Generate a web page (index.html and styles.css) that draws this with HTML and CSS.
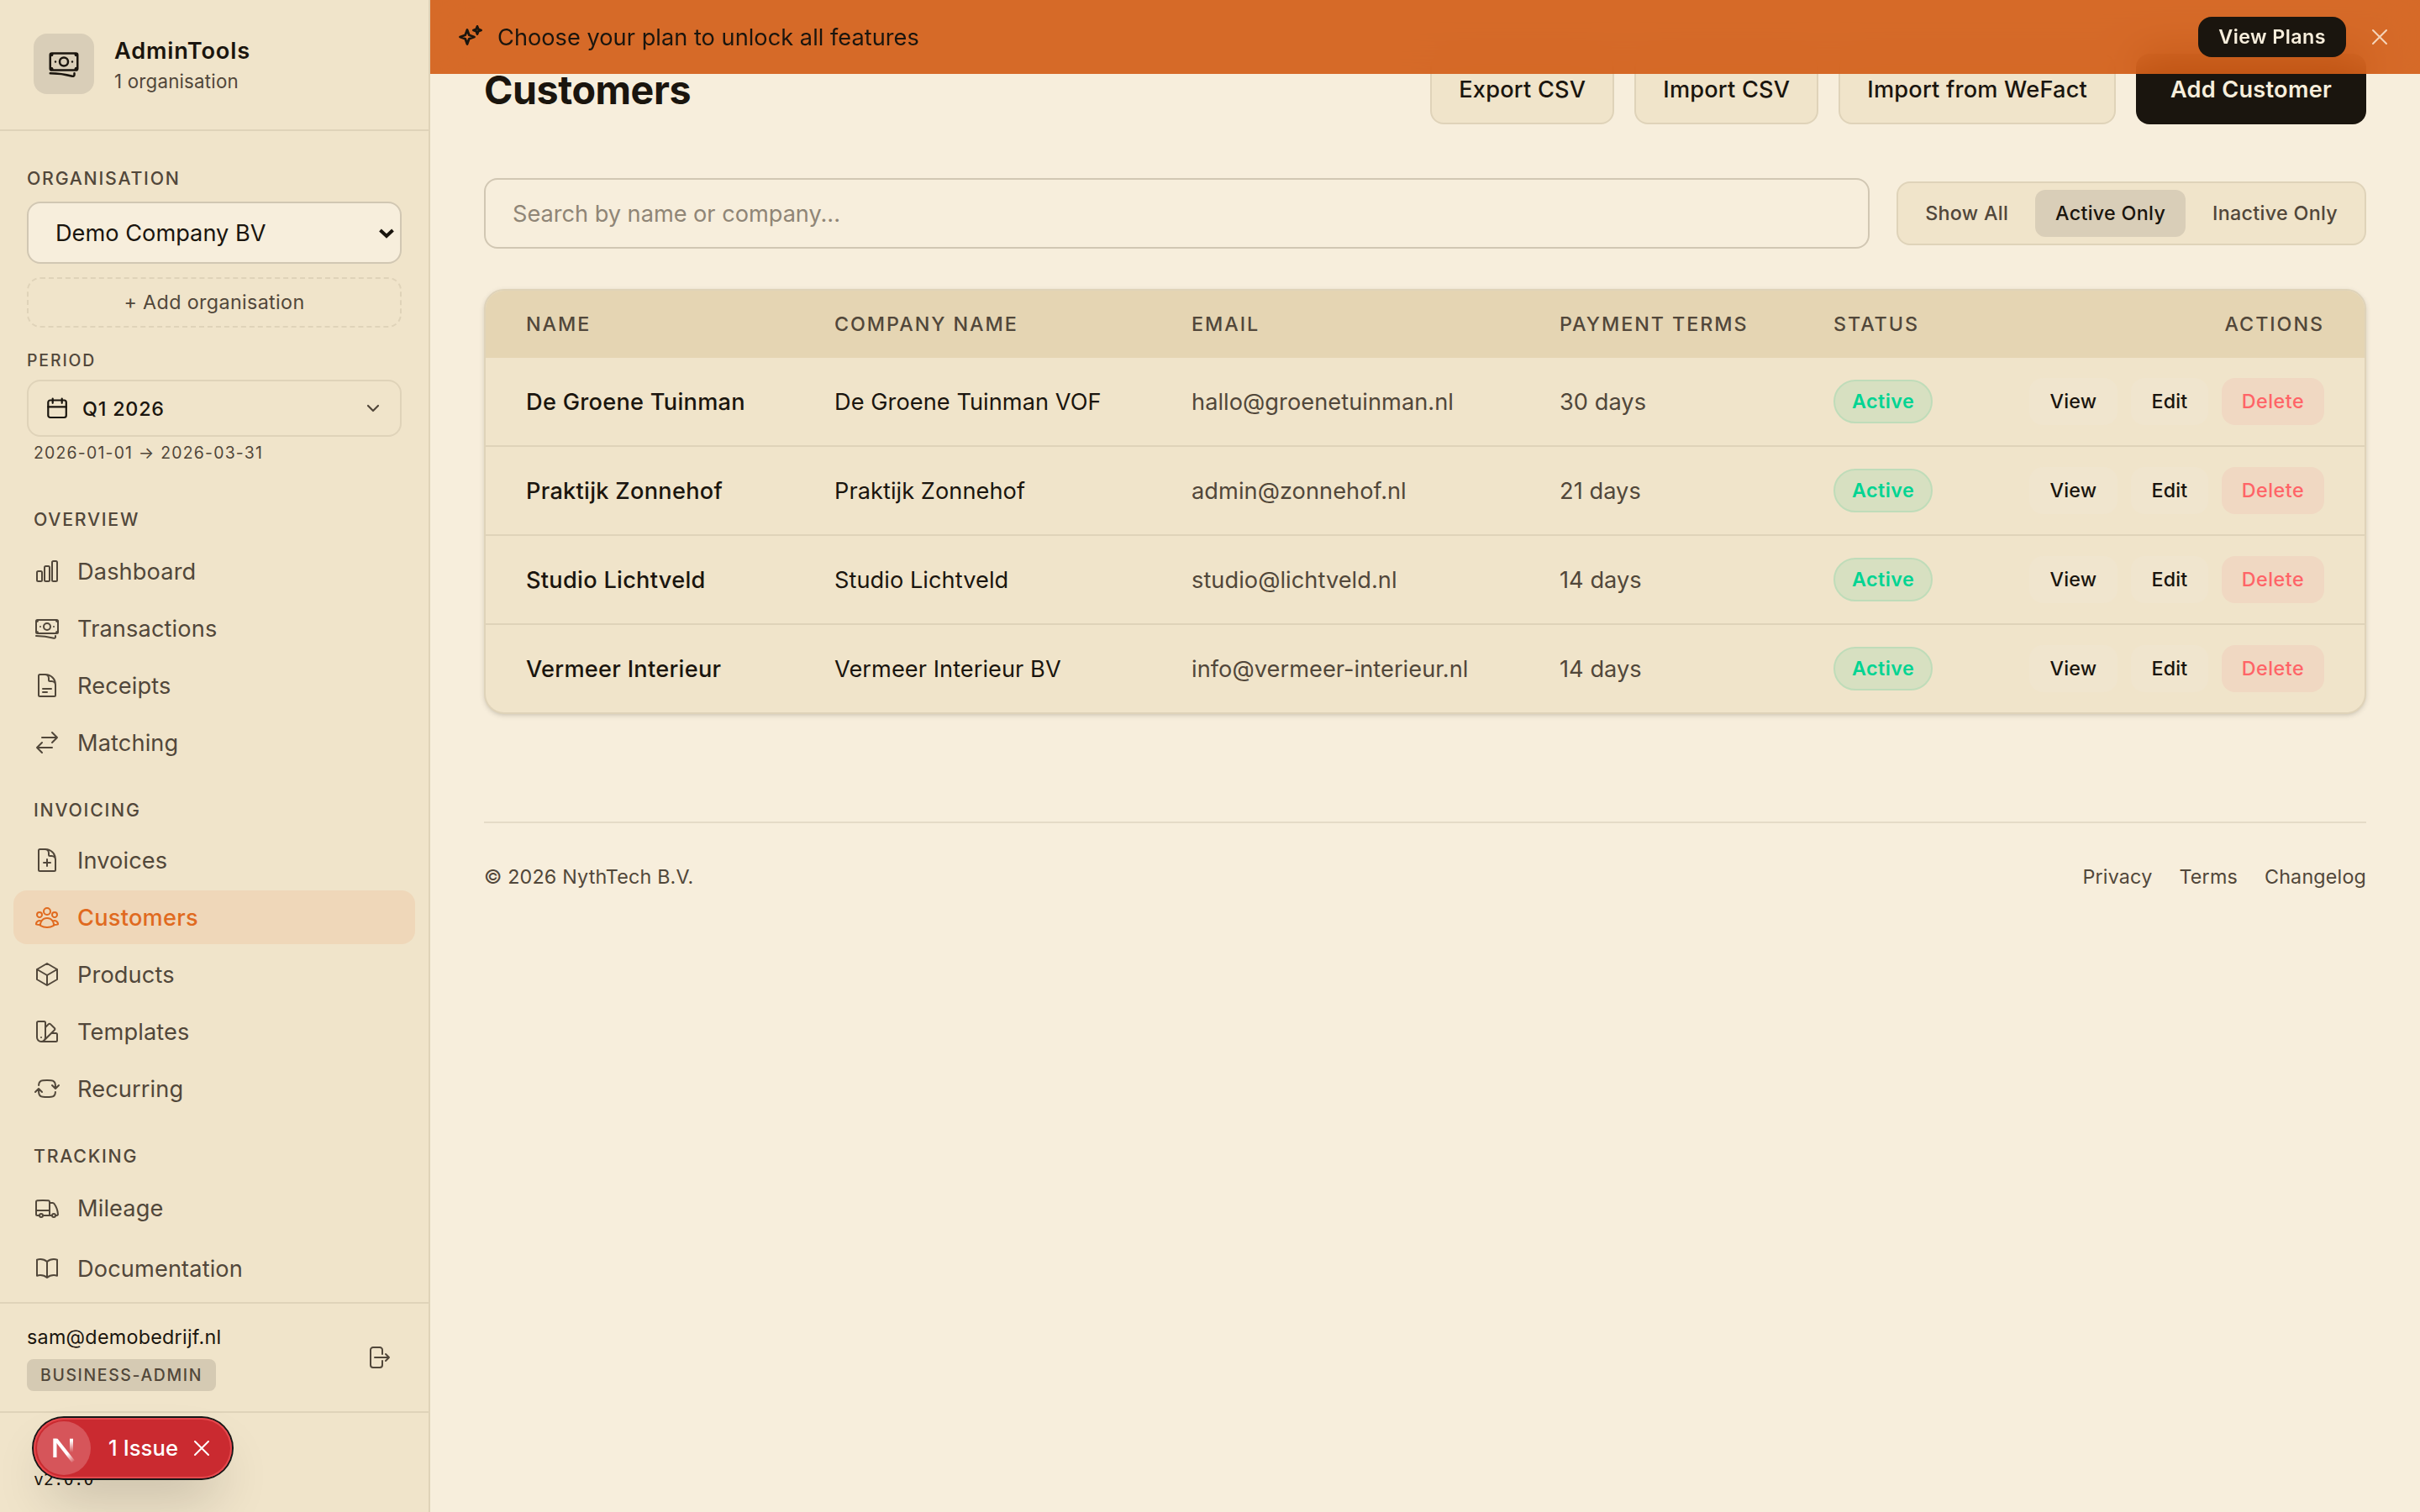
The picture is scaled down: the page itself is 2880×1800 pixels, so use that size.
FILE: index.html
```html
<!DOCTYPE html>
<html lang="en">
<head>
    <meta charset="UTF-8">
    <meta name="viewport" content="width=device-width, initial-scale=1.0">
    <title>Customers - AdminTools</title>
    <link rel="stylesheet" href="styles.css">
</head>
<body>

    <!-- Shared icons -->
    <svg class="icon-sprite" aria-hidden="true">
        <symbol id="icon-banknotes" viewBox="0 0 24 24"><path d="M2.25 18.75a60.07 60.07 0 0 1 15.797 2.101c.727.198 1.453-.342 1.453-1.096V18.75M3.75 4.5v.75A.75.75 0 0 1 3 6h-.75m0 0v-.375c0-.621.504-1.125 1.125-1.125H20.25M2.25 6v9m18-10.5v.75c0 .414.336.75.75.75h.75m-1.5-1.5h.375c.621 0 1.125.504 1.125 1.125v9.75c0 .621-.504 1.125-1.125 1.125h-.375m1.5-1.5H21a.75.75 0 0 0-.75.75v.75m0 0H3.75m0 0h-.375a1.125 1.125 0 0 1-1.125-1.125V15m1.5 1.5v-.75A.75.75 0 0 0 3 15h-.75M15 10.5a3 3 0 1 1-6 0 3 3 0 0 1 6 0Zm3 0h.008v.008H18V10.5Zm-12 0h.008v.008H6V10.5Z"/></symbol>
        <symbol id="icon-x" viewBox="0 0 24 24"><path d="M6 18 18 6M6 6l12 12"/></symbol>
    </svg>

    <div class="app">
        <!-- Sidebar -->
        <aside class="sidebar">
            <div class="brand">
                <div class="brand-logo">
                    <svg class="icon icon-lg"><use href="#icon-banknotes"/></svg>
                </div>
                <div>
                    <div class="brand-name">AdminTools</div>
                    <div class="brand-sub">1 organisation</div>
                </div>
            </div>

            <div class="sidebar-body">
                <div class="org-section">
                    <div class="field-label">Organisation</div>
                    <div class="org-select">
                        <span>Demo Company BV</span>
                        <svg class="org-arrow" viewBox="0 0 20 12"><path d="M2.5 2 10 9 17.500 2"/></svg>
                    </div>
                    <div class="add-org">+ Add organisation</div>
                    <div class="period-label">Period</div>
                    <div class="period-select">
                        <svg class="period-icon" viewBox="0 0 28 28"><rect x="3.300" y="4.500" width="21.500" height="20.500" rx="2.500"/><path d="M8.700 2.500v5.300M19.700 2.500v5.300M3.300 12.300h21.500"/></svg>
                        <span>Q1 2026</span>
                        <svg class="period-arrow" viewBox="0 0 24 24"><path d="m6 9 6 6 6-6"/></svg>
                    </div>
                    <div class="period-range">2026-01-01 → 2026-03-31</div>
                </div>

                <nav class="nav">
                    <div class="nav-group">
                        <div class="nav-label">Overview</div>
                        <a class="nav-item">
                            <svg class="icon" viewBox="0 0 24 24"><path d="M3 13.125C3 12.504 3.504 12 4.125 12h2.250c.621 0 1.125.504 1.125 1.125v6.750C7.500 20.496 6.996 21 6.375 21h-2.250A1.125 1.125 0 0 1 3 19.875v-6.750ZM9.750 8.625c0-.621.504-1.125 1.125-1.125h2.250c.621 0 1.125.504 1.125 1.125v11.250c0 .621-.504 1.125-1.125 1.125h-2.250a1.125 1.125 0 0 1-1.125-1.125V8.625ZM16.500 4.125c0-.621.504-1.125 1.125-1.125h2.250C20.496 3 21 3.504 21 4.125v15.750c0 .621-.504 1.125-1.125 1.125h-2.250a1.125 1.125 0 0 1-1.125-1.125V4.125Z"/></svg>
                            Dashboard
                        </a>
                        <a class="nav-item">
                            <svg class="icon"><use href="#icon-banknotes"/></svg>
                            Transactions
                        </a>
                        <a class="nav-item">
                            <svg class="icon" viewBox="0 0 24 24"><path d="M19.500 14.250v-2.625a3.375 3.375 0 0 0-3.375-3.375h-1.500A1.125 1.125 0 0 1 13.500 7.125v-1.500a3.375 3.375 0 0 0-3.375-3.375H8.250m0 12.750h7.500m-7.500 3H12M10.500 2.250H5.625c-.621 0-1.125.504-1.125 1.125v17.250c0 .621.504 1.125 1.125 1.125h12.750c.621 0 1.125-.504 1.125-1.125V11.250a9 9 0 0 0-9-9Z"/></svg>
                            Receipts
                        </a>
                        <a class="nav-item">
                            <svg class="icon" viewBox="0 0 24 24"><path d="M7.500 21 3 16.500m0 0L7.500 12M3 16.500h13.500m0-13.500L21 7.500m0 0L16.500 12M21 7.500H7.500"/></svg>
                            Matching
                        </a>
                    </div>

                    <div class="nav-group">
                        <div class="nav-label">Invoicing</div>
                        <a class="nav-item">
                            <svg class="icon" viewBox="0 0 24 24"><path d="M19.500 14.250v-2.625a3.375 3.375 0 0 0-3.375-3.375h-1.500A1.125 1.125 0 0 1 13.500 7.125v-1.500a3.375 3.375 0 0 0-3.375-3.375H8.250m3.750 9v6m3-3H9m1.500-12H5.625c-.621 0-1.125.504-1.125 1.125v17.250c0 .621.504 1.125 1.125 1.125h12.750c.621 0 1.125-.504 1.125-1.125V11.250a9 9 0 0 0-9-9Z"/></svg>
                            Invoices
                        </a>
                        <a class="nav-item active">
                            <svg class="icon" viewBox="0 0 24 24"><path d="M18 18.720a9.094 9.094 0 0 0 3.741-.479 3 3 0 0 0-4.682-2.720m.940 3.198.001.031c0 .225-.012.447-.037.666A11.944 11.944 0 0 1 12 21c-2.170 0-4.207-.576-5.963-1.584A6.062 6.062 0 0 1 6 18.719m12 0a5.971 5.971 0 0 0-.941-3.197m0 0A5.995 5.995 0 0 0 12 12.750a5.995 5.995 0 0 0-5.058 2.772m0 0a3 3 0 0 0-4.681 2.720 8.986 8.986 0 0 0 3.740.477m.940-3.197a5.971 5.971 0 0 0-.940 3.197M15 6.750a3 3 0 1 1-6 0 3 3 0 0 1 6 0Zm6 3a2.250 2.250 0 1 1-4.500 0 2.250 2.250 0 0 1 4.500 0Zm-13.500 0a2.250 2.250 0 1 1-4.500 0 2.250 2.250 0 0 1 4.500 0Z"/></svg>
                            Customers
                        </a>
                        <a class="nav-item">
                            <svg class="icon" viewBox="0 0 24 24"><path d="m21 7.500-9-5.250L3 7.500m18 0-9 5.250m9-5.250v9l-9 5.250M3 7.500l9 5.250M3 7.500v9l9 5.250m0-9v9"/></svg>
                            Products
                        </a>
                        <a class="nav-item">
                            <svg class="icon" viewBox="0 0 24 24"><path d="M4.098 19.902a3.750 3.750 0 0 0 5.304 0l6.401-6.402M6.750 21A3.750 3.750 0 0 1 3 17.250V4.125C3 3.504 3.504 3 4.125 3h5.250c.621 0 1.125.504 1.125 1.125v4.072M6.750 21a3.750 3.750 0 0 0 3.750-3.750V8.197M6.750 21h13.125c.621 0 1.125-.504 1.125-1.125v-5.250c0-.621-.504-1.125-1.125-1.125h-4.072M10.500 8.197l2.880-2.880c.438-.439 1.150-.439 1.590 0l3.712 3.713c.440.440.440 1.152 0 1.590l-2.879 2.880M6.750 17.250h.008v.008H6.750v-.008Z"/></svg>
                            Templates
                        </a>
                        <a class="nav-item">
                            <svg class="icon" viewBox="0 0 24 24"><path d="M19.500 12c0-1.232-.046-2.453-.138-3.662a4.006 4.006 0 0 0-3.700-3.700 48.678 48.678 0 0 0-7.324 0 4.006 4.006 0 0 0-3.700 3.700c-.017.220-.032.441-.046.662M19.500 12l3-3m-3 3-3-3m-12 3c0 1.232.046 2.453.138 3.662a4.006 4.006 0 0 0 3.700 3.700 48.656 48.656 0 0 0 7.324 0 4.006 4.006 0 0 0 3.700-3.700c.017-.220.032-.441.046-.662M4.500 12l3 3m-3-3-3 3"/></svg>
                            Recurring
                        </a>
                    </div>

                    <div class="nav-group">
                        <div class="nav-label">Tracking</div>
                        <a class="nav-item">
                            <svg class="icon" viewBox="0 0 24 24"><path d="M8.250 18.750a1.500 1.500 0 0 1-3 0m3 0a1.500 1.500 0 0 0-3 0m3 0h6m-9 0H3.375a1.125 1.125 0 0 1-1.125-1.125V14.250m17.250 4.500a1.500 1.500 0 0 1-3 0m3 0a1.500 1.500 0 0 0-3 0m3 0h1.125c.621 0 1.129-.504 1.090-1.124a17.902 17.902 0 0 0-3.213-9.193 2.056 2.056 0 0 0-1.580-.860H14.250M16.500 18.750h-2.250m0-11.177v-.958c0-.568-.422-1.048-.987-1.106a48.554 48.554 0 0 0-10.026 0 1.106 1.106 0 0 0-.987 1.106v7.635m12-6.677v6.677m0 4.500v-4.500m0 0h-12"/></svg>
                            Mileage
                        </a>
                    </div>
                </nav>
            </div>

            <div class="docs">
                <a class="nav-item">
                    <svg class="icon" viewBox="0 0 24 24"><path d="M12 6.042A8.967 8.967 0 0 0 6 3.750c-1.052 0-2.062.180-3 .512v14.250A8.987 8.987 0 0 1 6 18c2.305 0 4.408.867 6 2.292m0-14.250a8.966 8.966 0 0 1 6-2.292c1.052 0 2.062.180 3 .512v14.250A8.987 8.987 0 0 0 18 18a8.967 8.967 0 0 0-6 2.292m0-14.250v14.250"/></svg>
                    Documentation
                </a>
            </div>

            <div class="user">
                <div>
                    <div class="user-email">sam@demobedrijf.nl</div>
                    <div class="user-role">Business-Admin</div>
                </div>
                <div class="logout">
                    <svg class="icon" viewBox="0 0 24 24"><path d="M15.750 9V5.250A2.250 2.250 0 0 0 13.500 3h-6a2.250 2.250 0 0 0-2.250 2.250v13.500A2.250 2.250 0 0 0 7.500 21h6a2.250 2.250 0 0 0 2.250-2.250V15m3 0 3-3m0 0-3-3m3 3H9"/></svg>
                </div>
            </div>

            <div class="version">v2.0.0</div>
        </aside>

        <!-- Main content -->
        <main class="main">
            <div class="page-header">
                <h1>Customers</h1>
                <div class="page-actions">
                    <button class="btn">Export CSV</button>
                    <button class="btn">Import CSV</button>
                    <button class="btn">Import from WeFact</button>
                    <button class="btn btn-primary">Add Customer</button>
                </div>
            </div>

            <div class="toolbar">
                <input class="search" type="text" placeholder="Search by name or company...">
                <div class="filter">
                    <button>Show All</button>
                    <button class="selected">Active Only</button>
                    <button>Inactive Only</button>
                </div>
            </div>

            <div class="card">
                <table>
                    <colgroup>
                        <col class="col-name">
                        <col class="col-company">
                        <col class="col-email">
                        <col class="col-terms">
                        <col>
                    </colgroup>
                    <thead>
                        <tr>
                            <th>Name</th>
                            <th>Company Name</th>
                            <th>Email</th>
                            <th>Payment Terms</th>
                            <th><div class="split"><span>Status</span><span>Actions</span></div></th>
                        </tr>
                    </thead>
                    <tbody>
                        <tr>
                            <td class="name">De Groene Tuinman</td>
                            <td>De Groene Tuinman VOF</td>
                            <td class="muted">hallo@groenetuinman.nl</td>
                            <td class="muted">30 days</td>
                            <td>
                                <div class="split">
                                    <span class="badge">Active</span>
                                    <div class="row-actions"><button>View</button><button>Edit</button><button class="delete">Delete</button></div>
                                </div>
                            </td>
                        </tr>
                        <tr>
                            <td class="name">Praktijk Zonnehof</td>
                            <td>Praktijk Zonnehof</td>
                            <td class="muted">admin@zonnehof.nl</td>
                            <td class="muted">21 days</td>
                            <td>
                                <div class="split">
                                    <span class="badge">Active</span>
                                    <div class="row-actions"><button>View</button><button>Edit</button><button class="delete">Delete</button></div>
                                </div>
                            </td>
                        </tr>
                        <tr>
                            <td class="name">Studio Lichtveld</td>
                            <td>Studio Lichtveld</td>
                            <td class="muted">studio@lichtveld.nl</td>
                            <td class="muted">14 days</td>
                            <td>
                                <div class="split">
                                    <span class="badge">Active</span>
                                    <div class="row-actions"><button>View</button><button>Edit</button><button class="delete">Delete</button></div>
                                </div>
                            </td>
                        </tr>
                        <tr>
                            <td class="name">Vermeer Interieur</td>
                            <td>Vermeer Interieur BV</td>
                            <td class="muted">info@vermeer-interieur.nl</td>
                            <td class="muted">14 days</td>
                            <td>
                                <div class="split">
                                    <span class="badge">Active</span>
                                    <div class="row-actions"><button>View</button><button>Edit</button><button class="delete">Delete</button></div>
                                </div>
                            </td>
                        </tr>
                    </tbody>
                </table>
            </div>

            <footer class="footer">
                <span>© 2026 NythTech B.V.</span>
                <div class="footer-links">
                    <a>Privacy</a>
                    <a>Terms</a>
                    <a>Changelog</a>
                </div>
            </footer>
        </main>
    </div>

    <!-- Plan banner, sits over the scrolled content -->
    <div class="banner">
        <svg class="banner-icon" viewBox="0 0 32 32"><path d="M12 7.500 14.300 13.700 20.500 16 14.300 18.300 12 24.500 9.700 18.300 3.500 16 9.700 13.700ZM24 3.400 25.300 6.700 28.600 8 25.300 9.300 24 12.600 22.700 9.300 19.400 8 22.700 6.700Z"/></svg>
        <span class="banner-text">Choose your plan to unlock all features</span>
        <button class="banner-btn">View Plans</button>
        <svg class="icon banner-close"><use href="#icon-x"/></svg>
    </div>

    <!-- Dev tools badge -->
    <div class="issues">
        <div class="issues-logo">
            <svg viewBox="0 0 64 64">
                <defs>
                    <linearGradient id="fade-diagonal" gradientUnits="userSpaceOnUse" x1="36" y1="39" x2="44" y2="49"><stop offset="0" stop-color="#fff"/><stop offset="1" stop-color="#fff" stop-opacity="0"/></linearGradient>
                    <linearGradient id="fade-stem" gradientUnits="userSpaceOnUse" x1="40" y1="23" x2="40" y2="37"><stop offset="0" stop-color="#fff"/><stop offset="1" stop-color="#fff" stop-opacity="0"/></linearGradient>
                </defs>
                <path d="M19.300 20.700h4.200V43h-4.200z" fill="#fff"/>
                <path d="M19.300 20.700h5.200L44.800 46.500 41.400 49Z" fill="url(#fade-diagonal)"/>
                <path d="M39 20.700h4V37h-4z" fill="url(#fade-stem)"/>
            </svg>
        </div>
        <span class="issues-text">1 Issue</span>
        <svg class="icon issues-close"><use href="#icon-x"/></svg>
    </div>

</body>
</html>
```
FILE: styles.css
```css
* {
    margin: 0;
    padding: 0;
    box-sizing: border-box;
}

:root {
    --bg: #f7eedc;
    --surface: #f0e4ca;
    --surface-strong: #e5d5b3;
    --border: #dfd3b9;
    --border-strong: #d1c7b3;
    --selected: #d9ceb8;
    --text: #1a150e;
    --muted: #51473a;
    --accent: #e06a1f;
}

body {
    height: 1800px;
    overflow: hidden;
    background-color: var(--bg);
    color: var(--text);
    font-family: Inter, "Liberation Sans", sans-serif;
    font-size: 27.2px;
    letter-spacing: 0.05px;
}

button, input {
    font: inherit;
    letter-spacing: inherit;
    color: inherit;
    background: none;
    border: none;
}

.icon-sprite {
    display: none;
}

.icon {
    width: 32px;
    height: 32px;
    flex-shrink: 0;
}

.icon-lg {
    width: 40px;
    height: 40px;
}

svg {
    display: block;
    fill: none;
    stroke: currentColor;
    stroke-width: 1.5;
    stroke-linecap: round;
    stroke-linejoin: round;
}

.app {
    display: flex;
    height: 100%;
}

/* Sidebar */
.sidebar {
    display: flex;
    flex-direction: column;
    width: 512px;
    flex-shrink: 0;
    background-color: var(--surface);
    border-right: 2px solid var(--border);
}

.brand {
    display: flex;
    gap: 24px;
    height: 156px;
    padding: 40px;
    border-bottom: 2px solid var(--border);
}

.brand-logo {
    display: flex;
    align-items: center;
    justify-content: center;
    width: 72px;
    height: 72px;
    border-radius: 16px;
    background-color: var(--selected);
}

.brand-name {
    padding-top: 1px;
    line-height: 40px;
    font-weight: 600;
    letter-spacing: 0.83px;
}

.brand-sub {
    line-height: 32px;
    font-size: 22.3px;
    letter-spacing: 0.2px;
    color: var(--muted);
}

.sidebar-body {
    flex: 1;
    overflow: hidden;
}

.org-section {
    padding: 40px 32px 48px;
}

.field-label,
.period-label,
.nav-label {
    font-size: 21.3px;
    font-weight: 500;
    line-height: 32px;
    letter-spacing: 1.75px;
    text-transform: uppercase;
    color: var(--muted);
}

.org-select {
    display: flex;
    align-items: center;
    justify-content: space-between;
    height: 74px;
    margin-top: 12px;
    padding: 1px 6px 0 32px;
    border: 2px solid var(--border-strong);
    border-radius: 16px;
    background-color: var(--bg);
    letter-spacing: 0;
}

.org-arrow {
    width: 20px;
    height: 12px;
    stroke-width: 4;
    stroke-linecap: butt;
    stroke-linejoin: miter;
}

.add-org {
    height: 60px;
    margin-top: 16px;
    border: 2px dashed var(--border);
    border-radius: 16px;
    line-height: 56px;
    text-align: center;
    font-size: 23.3px;
    letter-spacing: 0.36px;
    color: var(--muted);
}

.period-label {
    margin: 24px 0 8px;
    font-size: 19.4px;
    line-height: 30px;
    letter-spacing: 1.9px;
}

.period-select {
    display: flex;
    align-items: center;
    gap: 16px;
    height: 68px;
    padding: 0 20px;
    border: 2px solid var(--border);
    border-radius: 16px;
    font-size: 23.3px;
    font-weight: 500;
    letter-spacing: 0.8px;
}

.period-icon {
    width: 28px;
    height: 28px;
    stroke-width: 2.2;
}

.period-arrow {
    width: 24px;
    height: 24px;
    margin-left: auto;
    stroke-width: 2.2;
    color: var(--muted);
}

.period-range {
    margin-top: 4px;
    padding-left: 8px;
    font-size: 19.4px;
    line-height: 30px;
    letter-spacing: 1.22px;
    color: var(--muted);
}

.nav {
    display: flex;
    flex-direction: column;
    gap: 32px;
    padding: 0 16px;
}

.nav-group {
    display: flex;
    flex-direction: column;
    gap: 4px;
}

.nav-label {
    margin-bottom: 8px;
    padding-left: 24px;
}

.nav-group:first-child .nav-label,
.nav-group:last-child .nav-label {
    margin-bottom: 10px;
}

.nav-item {
    display: flex;
    align-items: center;
    gap: 20px;
    height: 64px;
    padding: 0 24px;
    border-radius: 16px;
    letter-spacing: 0.12px;
    color: var(--muted);
}

.nav-item.active {
    background-color: #efd7b9;
    color: var(--accent);
    font-weight: 500;
    letter-spacing: 0.25px;
}

.docs {
    padding: 8px 16px;
    border-bottom: 2px solid var(--border);
}

.user {
    display: flex;
    align-items: center;
    justify-content: space-between;
    padding: 24px 32px;
    border-bottom: 2px solid var(--border);
}

.user-email {
    font-size: 23.3px;
    line-height: 32px;
    letter-spacing: 0.27px;
}

.user-role {
    display: inline-block;
    height: 38px;
    margin-top: 10px;
    padding: 0 16px;
    border-radius: 8px;
    background-color: #d5cab3;
    font-size: 19.4px;
    font-weight: 500;
    line-height: 38px;
    letter-spacing: 1.65px;
    text-transform: uppercase;
    vertical-align: top;
    color: var(--muted);
}

.logout {
    padding: 12px;
    color: var(--muted);
}

.version {
    height: 118px;
    padding: 64px 40px 0;
    font-family: "DejaVu Sans Mono", monospace;
    font-size: 19.8px;
    line-height: 32px;
    letter-spacing: 0;
}

/* Main content */
.main {
    flex: 1;
    padding: 64px;
}

.page-header {
    display: flex;
    align-items: center;
    justify-content: space-between;
    height: 84px;
}

h1 {
    padding-top: 2px;
    font-size: 46.6px;
    font-weight: 700;
    letter-spacing: -0.45px;
}

.page-actions {
    display: flex;
    gap: 24px;
}

.btn {
    height: 84px;
    padding: 0 32px;
    border: 2px solid var(--border);
    border-radius: 16px;
    background-color: var(--surface);
    font-weight: 500;
    letter-spacing: 0.2px;
}

.btn-primary {
    padding: 0 41px;
    border: none;
    background-color: var(--text);
    color: var(--bg);
    font-weight: 600;
    letter-spacing: 0.25px;
}

.toolbar {
    display: flex;
    align-items: center;
    gap: 32px;
    margin: 64px 0 48px;
}

.search {
    flex: 1;
    height: 84px;
    padding: 0 32px;
    border: 2px solid var(--border-strong);
    border-radius: 16px;
    letter-spacing: -0.03px;
}

.search::placeholder {
    color: #8f8576;
    opacity: 1;
}

.filter {
    display: flex;
    gap: 8px;
    padding: 8px;
    border: 2px solid var(--border);
    border-radius: 16px;
    background-color: var(--surface);
}

.filter button {
    height: 56px;
    padding: 0 24px 1px;
    border-radius: 12px;
    font-size: 23.3px;
    font-weight: 500;
    letter-spacing: 0.3px;
    color: var(--muted);
}

.filter .selected {
    background-color: var(--selected);
    color: var(--text);
}

/* Customer table */
.card {
    border: 2px solid var(--border);
    border-radius: 24px;
    background-color: var(--surface);
    box-shadow: 0 2px 6px rgba(26, 21, 14, 0.12), 0 2px 4px -2px rgba(26, 21, 14, 0.12);
    overflow: hidden;
}

table {
    width: 100%;
    table-layout: fixed;
    border-collapse: separate;
    border-spacing: 0;
}

.col-name { width: 367px; }
.col-company { width: 425px; }
.col-email { width: 438px; }
.col-terms { width: 326px; }

th {
    height: 80px;
    padding: 0 48px 1px;
    background-color: var(--surface-strong);
    font-size: 23.3px;
    font-weight: 500;
    letter-spacing: 1.95px;
    text-align: left;
    text-transform: uppercase;
    color: var(--muted);
}

td {
    height: 106px;
    padding: 0 0 0 48px;
    border-bottom: 2px solid var(--border);
    white-space: nowrap;
}

td:last-child {
    padding-right: 48px;
}

tr:last-child td {
    height: 104px;
    border-bottom: none;
}

.name {
    font-weight: 500;
    letter-spacing: 0.27px;
}

.muted {
    color: var(--muted);
}

.split {
    display: flex;
    align-items: center;
    justify-content: space-between;
}

.badge {
    height: 52px;
    padding: 0 20px;
    border: 2px solid #bfdcb9;
    border-radius: 26px;
    background-color: #d7e0c1;
    font-size: 23.3px;
    font-weight: 600;
    line-height: 48px;
    letter-spacing: 0.45px;
    color: #00d492;
}

.row-actions {
    display: flex;
    gap: 16px;
}

.row-actions button {
    height: 56px;
    padding: 0 24.5px 1px;
    border-radius: 16px;
    background-color: #f0e5ce;
    font-size: 23.3px;
    font-weight: 500;
    letter-spacing: 0.2px;
}

.row-actions .delete {
    padding: 0 23.8px 1px;
    background-color: #f0d8c2;
    letter-spacing: 0.5px;
    color: #ff6467;
}

.footer {
    display: flex;
    justify-content: space-between;
    margin-top: 128px;
    padding-top: 48px;
    border-top: 2px solid #e5dbc7;
    font-size: 23.3px;
    line-height: 32px;
    letter-spacing: 0.18px;
    color: var(--muted);
}

.footer-links {
    display: flex;
    gap: 32px;
}

/* Plan banner */
.banner {
    position: absolute;
    top: 0;
    left: 512px;
    right: 0;
    display: flex;
    align-items: center;
    height: 88px;
    padding: 0 32px;
    background-color: rgba(210, 91, 20, 0.9);
    backdrop-filter: blur(24px);
}

.banner-icon {
    width: 32px;
    height: 32px;
    margin-right: 16px;
    stroke-width: 2.8;
}

.banner-text {
    flex: 1;
    letter-spacing: 0.02px;
}

.banner-btn {
    height: 48px;
    margin-right: 24px;
    padding: 0 24px 1px;
    border-radius: 16px;
    background-color: var(--text);
    color: var(--bg);
    font-size: 23.3px;
    font-weight: 600;
    letter-spacing: 0.43px;
}

.banner-close {
    color: #f5d5ba;
}

/* Dev tools badge */
.issues {
    position: absolute;
    left: 40px;
    top: 1688px;
    display: flex;
    align-items: center;
    width: 236px;
    height: 72px;
    padding: 4px;
    border-radius: 36px;
    background-color: #ca2a30;
    box-shadow: 0 0 0 2px #171717, inset 0 0 0 2px #e5484d, 0 32px 64px -16px rgba(0, 0, 0, 0.24);
    color: #fff;
    font-size: 25.6px;
    font-weight: 500;
    letter-spacing: 0.1px;
}

.issues-logo {
    width: 64px;
    height: 64px;
    margin-right: 21px;
    border-radius: 50%;
    background-color: #d6555a;
}

.issues-logo svg {
    stroke: none;
}

.issues-text {
    padding-bottom: 2px;
}

.issues-close {
    margin-left: 12px;
}
```
